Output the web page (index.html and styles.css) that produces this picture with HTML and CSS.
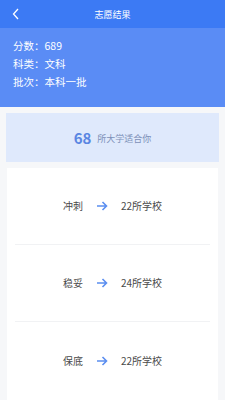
FILE: index.html
```html
<!DOCTYPE html>
<html lang="zh">
<head>
<meta charset="utf-8">
<link rel="stylesheet" href="styles.css">
</head>
<body>
<div class="header">
  <svg class="back" width="8" height="12" viewBox="0 0 8 12"><path d="M6 1 L1.5 6 L6 11" fill="none" stroke="#fff" stroke-width="1.3"/></svg>
  <div class="title">志愿结果</div>
</div>
<div class="info">
  <div class="line">分数：689</div>
  <div class="line">科类：文科</div>
  <div class="line">批次：本科一批</div>
</div>
<div class="summary"><span class="num">68</span><span class="desc">所大学适合你</span></div>
<div class="list">
  <div class="row"><span class="label">冲刺</span><svg class="arrow" width="12" height="10" viewBox="0 0 12 10"><path d="M1 5 H10.5 M6.5 1 L10.5 5 L6.5 9" fill="none" stroke="#5b8ef0" stroke-width="1.6"/></svg><span class="count">22所学校</span></div>
  <div class="row"><span class="label">稳妥</span><svg class="arrow" width="12" height="10" viewBox="0 0 12 10"><path d="M1 5 H10.5 M6.5 1 L10.5 5 L6.5 9" fill="none" stroke="#5b8ef0" stroke-width="1.6"/></svg><span class="count">24所学校</span></div>
  <div class="row last"><span class="label">保底</span><svg class="arrow" width="12" height="10" viewBox="0 0 12 10"><path d="M1 5 H10.5 M6.5 1 L10.5 5 L6.5 9" fill="none" stroke="#5b8ef0" stroke-width="1.6"/></svg><span class="count">22所学校</span></div>
</div>
</body>
</html>
```
FILE: styles.css
```css
* { box-sizing: border-box; }
html, body { margin: 0; padding: 0; }
body {
  width: 225px;
  height: 400px;
  overflow: hidden;
  background: #f6f7f9;
  font-family: "Noto Sans CJK SC", "Noto Sans", sans-serif;
}
.header {
  position: relative;
  height: 28px;
  background: #3c7af4;
  display: flex;
  align-items: center;
  justify-content: center;
}
.back { position: absolute; left: 12px; top: 8px; }
.title { color: #fff; font-size: 9px; line-height: 1; }
.info {
  background: #5a8cf5;
  height: 79px;
  padding: 9px 0 0 13px;
  display: flex;
  flex-direction: column;
}
.line { color: #fff; font-size: 10.5px; line-height: 18px; }
.summary {
  margin: 6px 6px 0 6px;
  height: 49px;
  background: #dfe9fc;
  display: flex;
  align-items: center;
  justify-content: center;
  gap: 6px;
}
.num { color: #5a86e2; font-size: 15px; font-weight: 700; line-height: 1; }
.desc { color: #7d90b8; font-size: 9px; line-height: 1; padding-top: 2px; }
.list {
  margin: 6px 7px 0 7px;
  background: #fff;
  padding: 0 8px;
  height: 240px;
}
.row {
  height: 77px;
  border-bottom: 1px solid #f1f2f4;
  display: flex;
  align-items: center;
  justify-content: center;
  gap: 13px;
}
.row.last { border-bottom: none; }
.label, .count { color: #4a4a4a; font-size: 10px; line-height: 1; }
```
